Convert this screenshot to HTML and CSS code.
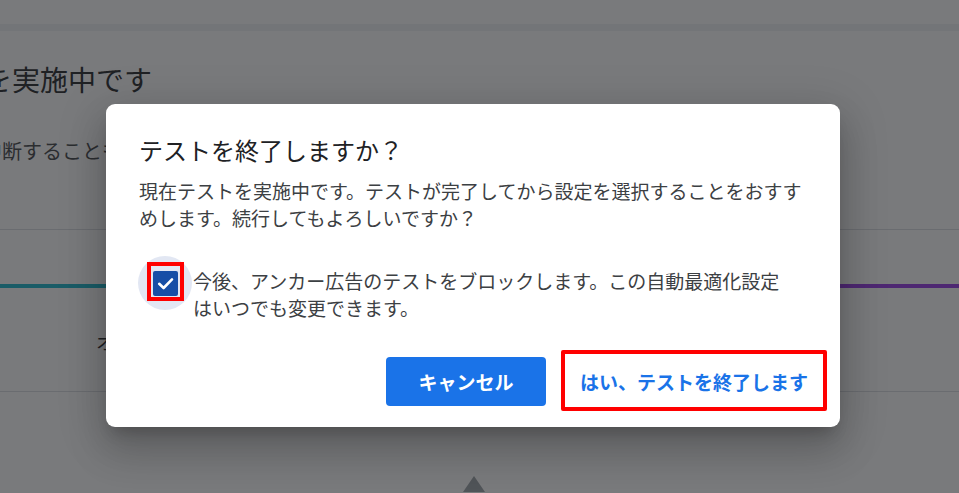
FILE: index.html
```html
<!DOCTYPE html>
<html lang="ja">
<head>
<meta charset="utf-8">
<title>テストを終了しますか？</title>
<link rel="stylesheet" href="styles.css">
</head>
<body>
<div class="page">
  <div class="topbar"></div>
  <div class="topbar-band"></div>
  <section class="hero">
    <h1 class="hero-title">テストを実施中です</h1>
    <p class="hero-text">中断することもできます</p>
  </section>
  <div class="divider"></div>
  <div class="columns">
    <div class="column column-teal"><span class="column-label">オリジナル</span></div>
    <div class="column column-purple"><span class="column-label">テスト</span></div>
  </div>
  <div class="footer"><span class="marker"></span></div>
</div>

<div class="scrim"></div>

<div class="dialog" role="dialog">
  <h2 class="dialog-title">テストを終了しますか？</h2>
  <p class="dialog-body">現在テストを実施中です。テストが完了してから設定を選択することをおすすめします。続行してもよろしいですか？</p>
  <div class="check-row">
    <div class="ripple">
      <span class="checkbox">
        <svg width="25" height="25" viewBox="0 0 25 25"><path d="M6.2 12.8 L10.6 17 L19 8.4" fill="none" stroke="#ffffff" stroke-width="2.6" stroke-linecap="round" stroke-linejoin="round"/></svg>
      </span>
      <span class="annot annot-check"></span>
    </div>
    <p class="check-label">今後、アンカー広告のテストをブロックします。この自動最適化設定はいつでも変更できます。</p>
  </div>
  <div class="actions">
    <button class="btn btn-filled">キャンセル</button>
    <button class="btn btn-text">はい、テストを終了します<span class="annot annot-btn"></span></button>
  </div>
</div>
</body>
</html>
```

FILE: styles.css
```css
* { box-sizing: border-box; }
html, body {
  margin: 0;
  padding: 0;
}
body {
  width: 959px;
  height: 493px;
  overflow: hidden;
  background: #ffffff;
  font-family: "Noto Sans CJK JP", "Noto Sans", sans-serif;
  position: relative;
}

/* background page */
.page { width: 959px; }
.topbar { height: 24px; background: #ffffff; }
.topbar-band { height: 7px; background: #f1f3f4; }
.hero { padding: 0; }
.hero-title {
  margin: 30px 0 0 -100px;
  font-size: 28px;
  line-height: 36px;
  font-weight: 400;
  color: #202124;
  white-space: nowrap;
}
.hero-text {
  margin: 39px 0 0 -18px;
  font-size: 20px;
  line-height: 30px;
  color: #3c4043;
  white-space: nowrap;
}
.divider {
  margin-top: 63px;
  height: 1px;
  background: #dadce0;
}
.columns {
  display: flex;
  margin-top: 54px;
  border-bottom: 1px solid #dadce0;
}
.column {
  flex: 1;
  height: 107px;
  border-top: 4px solid #12b5cb;
  padding: 42px 0 0 96px;
}
.column-purple { border-top-color: #9334e6; }
.column-label {
  font-size: 19px;
  line-height: 24px;
  color: #202124;
  white-space: nowrap;
}
.footer { padding: 84px 0 0 463px; }
.marker {
  display: block;
  width: 0;
  height: 0;
  border-left: 11px solid transparent;
  border-right: 11px solid transparent;
  border-bottom: 16px solid #9aa0a6;
}

/* scrim */
.scrim {
  position: absolute;
  inset: 0;
  background: rgba(32, 33, 36, 0.6);
}

/* dialog */
.dialog {
  position: absolute;
  left: 106px;
  top: 104px;
  width: 734px;
  height: 323px;
  background: #ffffff;
  border-radius: 9px;
  padding: 30px 33px 21px 33px;
  box-shadow: 0 11px 15px -7px rgba(0,0,0,.2), 0 24px 38px 3px rgba(0,0,0,.14), 0 9px 46px 8px rgba(0,0,0,.12);
  display: flex;
  flex-direction: column;
}
.dialog-title {
  margin: 0;
  font-size: 24px;
  line-height: 32px;
  font-weight: 400;
  color: #202124;
}
.dialog-body {
  margin: 11px 0 0 0;
  font-size: 19px;
  line-height: 27px;
  color: #3c4043;
}
.check-row {
  display: flex;
  align-items: flex-start;
  margin-top: 25px;
}
.ripple {
  position: relative;
  flex: none;
  width: 54px;
  height: 54px;
  margin-left: -1px;
  border-radius: 50%;
  background: #e2e7f3;
  display: flex;
  align-items: center;
  justify-content: center;
}
.checkbox {
  width: 25px;
  height: 25px;
  border-radius: 2px;
  background: #174ea6;
  display: flex;
}
.check-label {
  margin: 11px 0 0 1px;
  flex: 0 1 600px;
  font-size: 19px;
  line-height: 27px;
  color: #3c4043;
}
.actions {
  display: flex;
  justify-content: flex-end;
  gap: 20px;
  margin-top: 36px;
  margin-right: -15px;
}
.btn {
  position: relative;
  height: 49px;
  border: none;
  font-family: "Noto Sans CJK JP", "Noto Sans", sans-serif;
  font-size: 19px;
  font-weight: 700;
  border-radius: 4px;
  cursor: pointer;
}
.btn-filled {
  width: 160px;
  background: #1a73e8;
  color: #ffffff;
}
.btn-text {
  width: 256px;
  background: transparent;
  color: #1a73e8;
  padding: 0;
}

/* red annotation boxes */
.annot {
  position: absolute;
  border: 4px solid #ff0000;
  pointer-events: none;
}
.annot-check {
  left: 9px;
  top: 6px;
  width: 37px;
  height: 39px;
}
.annot-btn {
  left: -5px;
  right: -5px;
  top: -7px;
  bottom: -5px;
  border-radius: 2px;
}
```
